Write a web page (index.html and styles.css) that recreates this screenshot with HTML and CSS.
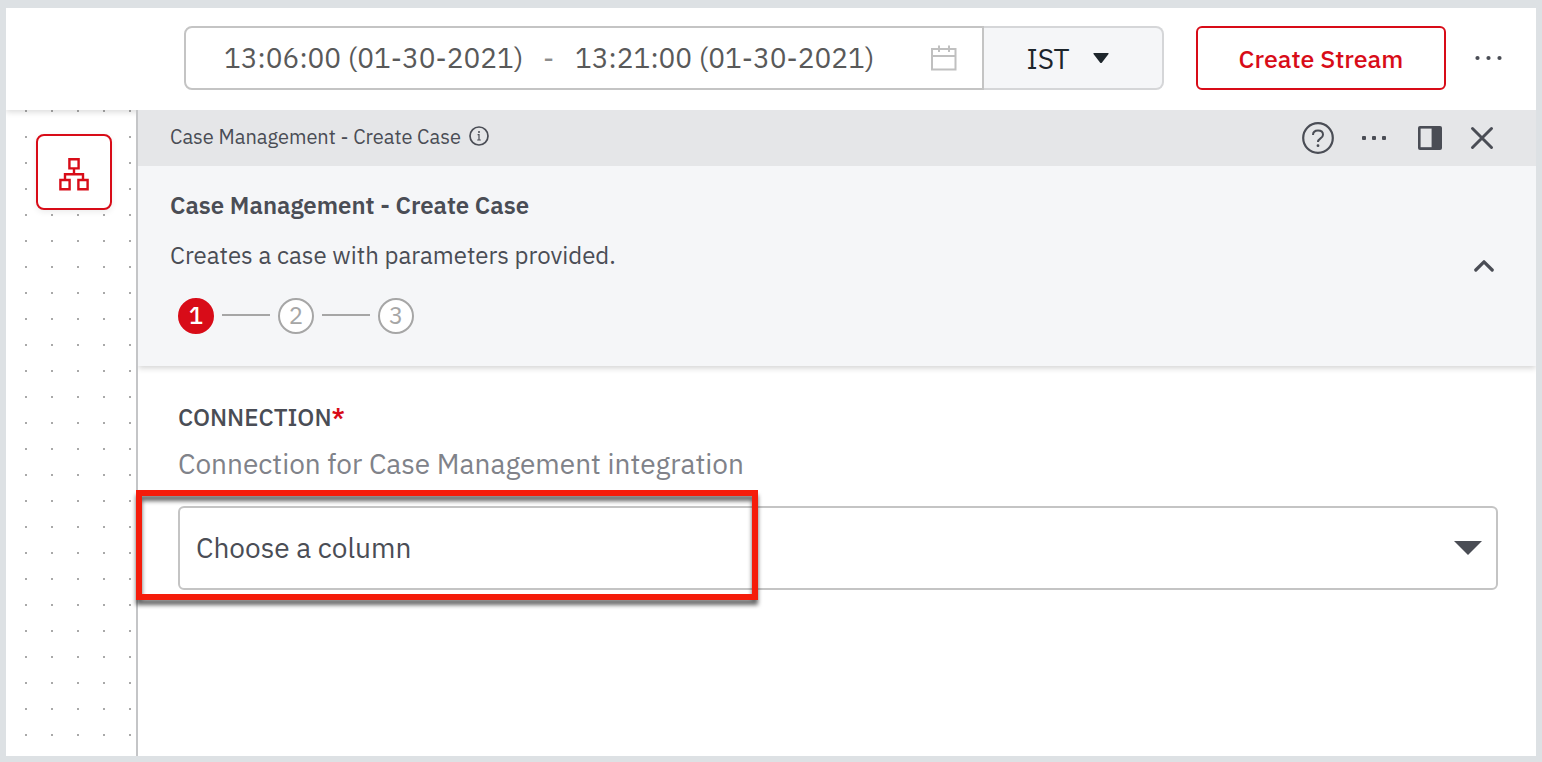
FILE: index.html
```html
<!DOCTYPE html>
<html lang="en">
<head>
<meta charset="utf-8">
<title>Case Management - Create Case</title>
<link rel="stylesheet" href="styles.css">
</head>
<body>
<div class="app">
  <header class="topbar">
    <div class="range">
      <input class="range-input" type="text" aria-label="Start time" value="13:06:00 (01-30-2021)">
      <span class="range-separator">-</span>
      <input class="range-input" type="text" aria-label="End time" value="13:21:00 (01-30-2021)">
      <svg class="calendar-icon" width="28" height="28" viewBox="0 0 28 28" fill="none" stroke="#c0c0c0" stroke-width="2" aria-hidden="true">
        <path d="M2 5h23.500v20.500H2zM2 12h23.500M9 1.500V8M19 1.500V8"/>
      </svg>
    </div>
    <button class="timezone" type="button">IST
      <svg width="18" height="12" viewBox="0 0 18 12" fill="#1d252b" aria-hidden="true"><path d="M2 1h14q1 0 .5 1l-6.500 8.500q-1 1-2 0L1.500 2Q1 1 2 1z"/></svg>
    </button>
    <button class="create-stream" type="button">Create Stream</button>
    <button class="icon-button" type="button" aria-label="More actions">
      <svg width="28" height="6" viewBox="0 0 28 6" fill="#4a4d55"><circle cx="3.500" cy="3" r="2.100"/><circle cx="14.500" cy="3" r="2.100"/><circle cx="25.500" cy="3" r="2.100"/></svg>
    </button>
  </header>

  <div class="workspace">
    <aside class="canvas">
      <button class="canvas-tool" type="button" aria-label="Arrange nodes">
        <svg width="32" height="34" viewBox="0 0 32 34" fill="none" stroke="#d80c18" stroke-width="2.400" aria-hidden="true">
          <path d="M11.400 2.200h9.200v9.200h-9.200zM2.400 23h9.200v9.200H2.400zM20.400 23h9.200v9.200h-9.200zM16 11v6M7 23v-5.800h18V23"/>
        </svg>
      </button>
    </aside>

    <main class="panel">
      <div class="panel-bar">
        <div class="panel-name">Case Management - Create Case
          <svg width="20" height="20" viewBox="0 0 20 20" fill="none" stroke="#4a4d55" aria-hidden="true">
            <circle cx="10" cy="10" r="9" stroke-width="1.700"/><path d="M8.600 8.600H10V14M8.200 14h3.600" stroke-width="1.200"/><circle cx="10" cy="5.900" r="1" fill="#4a4d55" stroke="none"/>
          </svg>
        </div>
        <div class="panel-actions">
          <button class="icon-button" type="button" aria-label="Help">
            <svg width="32" height="32" viewBox="0 0 32 32" fill="none" stroke="#4a4d55" stroke-width="2.200">
              <circle cx="16" cy="16" r="14.800"/><path d="M11 13c0-3 2-4.500 5-4.500s5 1.700 5 4.200c0 4-5 3.300-5 7.300" stroke-width="2"/><circle cx="16" cy="23.700" r="1.400" fill="#4a4d55" stroke="none"/>
            </svg>
          </button>
          <button class="icon-button options" type="button" aria-label="Panel options">
            <svg width="24" height="4" viewBox="0 0 24 4" fill="#4a4d55"><rect width="4" height="4" rx="1"/><rect x="10" width="4" height="4" rx="1"/><rect x="20" width="4" height="4" rx="1"/></svg>
          </button>
          <button class="icon-button" type="button" aria-label="Dock panel">
            <svg width="24" height="24" viewBox="0 0 24 24"><rect width="24" height="24" rx="2" fill="#4a4d55"/><path d="M2.600 2.600h11v18.600h-11z" fill="#e5e6e8"/></svg>
          </button>
          <button class="icon-button" type="button" aria-label="Close panel">
            <svg width="24" height="24" viewBox="0 0 24 24" fill="none" stroke="#4a4d55" stroke-width="3" stroke-linecap="round"><path d="M2.500 2.500l19 19M21.500 2.500l-19 19"/></svg>
          </button>
        </div>
      </div>

      <section class="intro">
        <div class="intro-text">
          <h1 class="intro-title">Case Management - Create Case</h1>
          <p class="intro-description">Creates a case with parameters provided.</p>
          <ol class="steps">
            <li class="step step-current">1</li>
            <li class="step">2</li>
            <li class="step">3</li>
          </ol>
        </div>
        <button class="icon-button" type="button" aria-label="Collapse">
          <svg width="20" height="14" viewBox="0 0 20 14" fill="none" stroke="#4a4d55" stroke-width="3.200" stroke-linecap="round" stroke-linejoin="round"><path d="M1.800 11L10 2.800l8.200 8.200"/></svg>
        </button>
      </section>

      <form class="fields">
        <label class="field-label" for="connection">CONNECTION<span class="required">*</span></label>
        <p class="field-hint" id="connection-hint">Connection for Case Management integration</p>
        <div class="select-wrap">
          <select class="select" id="connection" aria-describedby="connection-hint">
            <option>Choose a column</option>
          </select>
          <svg class="select-arrow" width="28" height="14" viewBox="0 0 28 14" fill="#4a4d55" aria-hidden="true"><path d="M0 0h28L14 14z"/></svg>
          <div class="highlight"></div>
        </div>
      </form>
    </main>
  </div>
</div>
</body>
</html>
```
FILE: styles.css
```css
* {
  box-sizing: border-box;
}

body {
  margin: 0;
  background: #dde1e4;
  color: #4a4d55;
  font-family: "IBM Plex Sans", Roboto, sans-serif;
}

button,
input,
select {
  margin: 0;
  font: inherit;
  color: inherit;
}

.app {
  display: flex;
  flex-direction: column;
  min-height: 100vh;
  padding: 8px 6px 6px;
}

.topbar {
  z-index: 1;
  display: flex;
  align-items: center;
  padding: 18px 34px 20px 178px;
  background: #fff;
  box-shadow: 0 2px 6px rgba(0, 0, 0, 0.15);
  clip-path: inset(0 0 -10px 0);
}

.range {
  display: flex;
  flex: 1;
  align-items: center;
  height: 64px;
  padding: 0 24px 0 38px;
  border: 2px solid #c4c4c4;
  border-radius: 8px 0 0 8px;
  color: #595959;
  font-size: 28px;
}

.range-input {
  width: 304px;
  padding: 0 0 2px;
  border: 0;
  background: none;
  outline: 0;
}

.range-separator {
  width: 47px;
  padding: 0 6px 2px 0;
  color: #8c8c8c;
  text-align: center;
}

.calendar-icon {
  margin-left: auto;
}

.timezone {
  display: flex;
  align-items: center;
  justify-content: center;
  gap: 22px;
  width: 180px;
  height: 64px;
  padding: 0 10px 0 0;
  border: 2px solid #d5d6d8;
  border-left: 0;
  border-radius: 0 8px 8px 0;
  background: #f5f6f8;
  color: #1d252b;
  font-size: 28px;
}

.create-stream {
  width: 250px;
  height: 64px;
  margin: 0 28px 0 32px;
  padding: 0;
  border: 2px solid #d80c18;
  border-radius: 6px;
  background: #fff;
  color: #d80c18;
  font-size: 25px;
  font-weight: 500;
}

.icon-button {
  display: flex;
  padding: 0;
  border: 0;
  background: none;
}

.workspace {
  display: flex;
  flex: 1;
}

.canvas {
  width: 130px;
  padding: 24px 0 0 30px;
  background: #fff conic-gradient(from 270deg at 2px 2px, #a9a9a9 90deg, transparent 0) 19px 0 / 26px 26px;
}

.canvas-tool {
  display: flex;
  align-items: center;
  justify-content: center;
  width: 76px;
  height: 76px;
  padding: 4px 0 0;
  border: 2px solid #d80c18;
  border-radius: 8px;
  background: #fff;
  box-shadow: 0 2px 6px rgba(0, 0, 0, 0.08);
}

.panel {
  z-index: 2;
  flex: 1;
  border-left: 2px solid #c4c5c7;
  background: #fff;
}

.panel-bar {
  display: flex;
  align-items: center;
  height: 56px;
  padding: 0 42px 0 32px;
  background: #e5e6e8;
}

.panel-name {
  display: flex;
  align-items: center;
  gap: 8px;
  padding-bottom: 4px;
  font-size: 20px;
}

.panel-actions {
  display: flex;
  align-items: center;
  gap: 28px;
  margin-left: auto;
}

.options {
  padding-right: 4px;
}

.intro {
  display: flex;
  align-items: center;
  justify-content: space-between;
  padding: 24px 42px 24px 32px;
  background: #f5f6f8;
  box-shadow: 0 2px 6px rgba(0, 0, 0, 0.18);
  clip-path: inset(0 0 -10px 0);
}

.intro-text {
  padding-bottom: 8px;
}

.intro-title {
  margin: 0;
  font-size: 24px;
  font-weight: 600;
  line-height: 30px;
}

.intro-description {
  margin: 20px 0 28px;
  font-size: 24px;
  line-height: 30px;
}

.steps {
  display: flex;
  align-items: center;
  gap: 64px;
  margin: 0;
  padding: 0 8px;
  list-style: none;
}

.step {
  position: relative;
  display: flex;
  align-items: center;
  justify-content: center;
  width: 36px;
  height: 36px;
  padding-bottom: 2px;
  border: 2px solid #a6a6a6;
  border-radius: 50%;
  background: #fff;
  color: #a6a6a6;
  font-size: 24px;
}

.step-current {
  border-color: #d80c18;
  background: #d80c18;
  color: #fff;
  font-weight: 500;
}

.step + .step::before {
  content: "";
  position: absolute;
  top: 14px;
  right: 42px;
  width: 48px;
  height: 2px;
  background: #a6a6a6;
}

.fields {
  padding: 36px 38px 0 40px;
}

.field-label {
  display: block;
  font-size: 24px;
  font-weight: 500;
  line-height: 30px;
}

.required {
  color: #d80c18;
  font-weight: 600;
}

.field-hint {
  margin: 14px 0 24px;
  color: #808289;
  font-size: 28px;
  line-height: 36px;
}

.select-wrap {
  position: relative;
}

.select {
  display: block;
  width: 100%;
  height: 84px;
  padding: 0 60px 2px 16px;
  border: 2px solid #c4c4c4;
  border-radius: 6px;
  appearance: none;
  background: #fff;
  font-size: 28px;
}

.select-arrow {
  position: absolute;
  top: 35px;
  right: 16px;
  pointer-events: none;
}

.highlight {
  position: absolute;
  top: -16px;
  left: -42px;
  width: 622px;
  height: 110px;
  border: 6px solid #f51c0a;
  filter: drop-shadow(0 5px 2px rgba(0, 0, 0, 0.6));
  pointer-events: none;
}
```
